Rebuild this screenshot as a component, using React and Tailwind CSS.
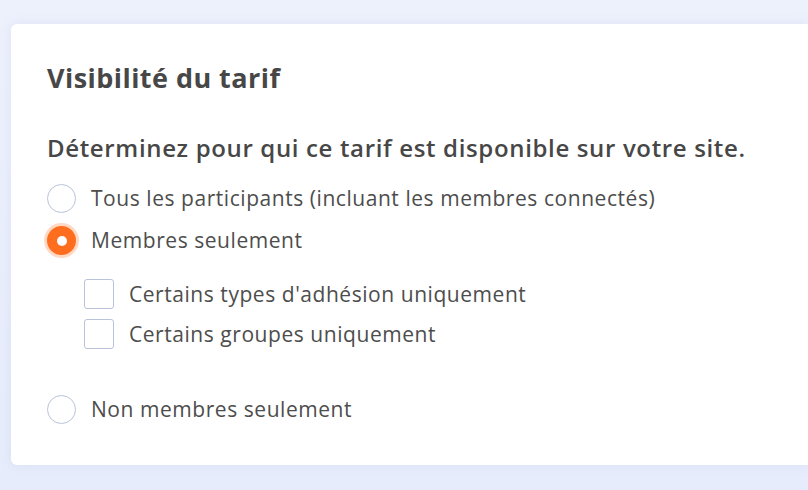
import React, { useState } from 'react';

const Radio = ({ checked }) => (
  <span
    className={`flex h-[29px] w-[29px] shrink-0 items-center justify-center rounded-full ${
      checked
        ? 'bg-[#ff6d1f] ring-[3px] ring-[#ffd9c4]'
        : 'border border-[#b9c3d9] bg-white'
    }`}
  >
    {checked && <span className="h-[10px] w-[10px] rounded-full bg-white" />}
  </span>
);

const Checkbox = () => (
  <span className="h-[30px] w-[30px] shrink-0 rounded-[3px] border border-[#b9c3d9] bg-white" />
);

const App = () => {
  const [choice, setChoice] = useState('members');

  const options = [
    { id: 'all', label: 'Tous les participants (incluant les membres connectés)' },
    { id: 'members', label: 'Membres seulement' },
  ];

  return (
    <div className="h-[490px] w-[808px] overflow-hidden bg-gradient-to-b from-[#edf1fc] to-[#e6ecfb] pl-[11px] pt-[24px] font-['Open_Sans',sans-serif] text-[#4d4d4d]">
      <div className="h-[441px] rounded-l-[6px] bg-white pl-[36px] pt-[36px] shadow-[0_0_12px_rgba(120,140,200,0.12)]">
        {/* Header */}
        <h2 className="text-[27px] font-bold leading-[36px] tracking-[0.45px] text-[#474747]">Visibilité du tarif</h2>

        <p className="mt-[37px] text-[24px] font-semibold leading-[30px] tracking-[0.65px] text-[#474747]">
          Déterminez pour qui ce tarif est disponible sur votre site.
        </p>

        {/* Options */}
        <div className="mt-[21px] flex flex-col gap-[13px]">
          {options.map((o) => (
            <label key={o.id} className="flex cursor-pointer items-center gap-[15px]" onClick={() => setChoice(o.id)}>
              <Radio checked={choice === o.id} />
              <span className="text-[21px] leading-[29px] tracking-[0.55px]">{o.label}</span>
            </label>
          ))}
        </div>

        <div className="mt-[24px] flex flex-col gap-[10px] pl-[37px]">
          <label className="flex items-center gap-[15px]">
            <Checkbox />
            <span className="text-[21px] leading-[30px] tracking-[0.55px]">Certains types d'adhésion uniquement</span>
          </label>
          <label className="flex items-center gap-[15px]">
            <Checkbox />
            <span className="text-[21px] leading-[30px] tracking-[0.55px]">Certains groupes uniquement</span>
          </label>
        </div>

        <label className="mt-[46px] flex cursor-pointer items-center gap-[15px]" onClick={() => setChoice('non')}>
          <Radio checked={choice === 'non'} />
          <span className="text-[21px] leading-[29px] tracking-[0.55px]">Non membres seulement</span>
        </label>
      </div>
    </div>
  );
};

export default App;
